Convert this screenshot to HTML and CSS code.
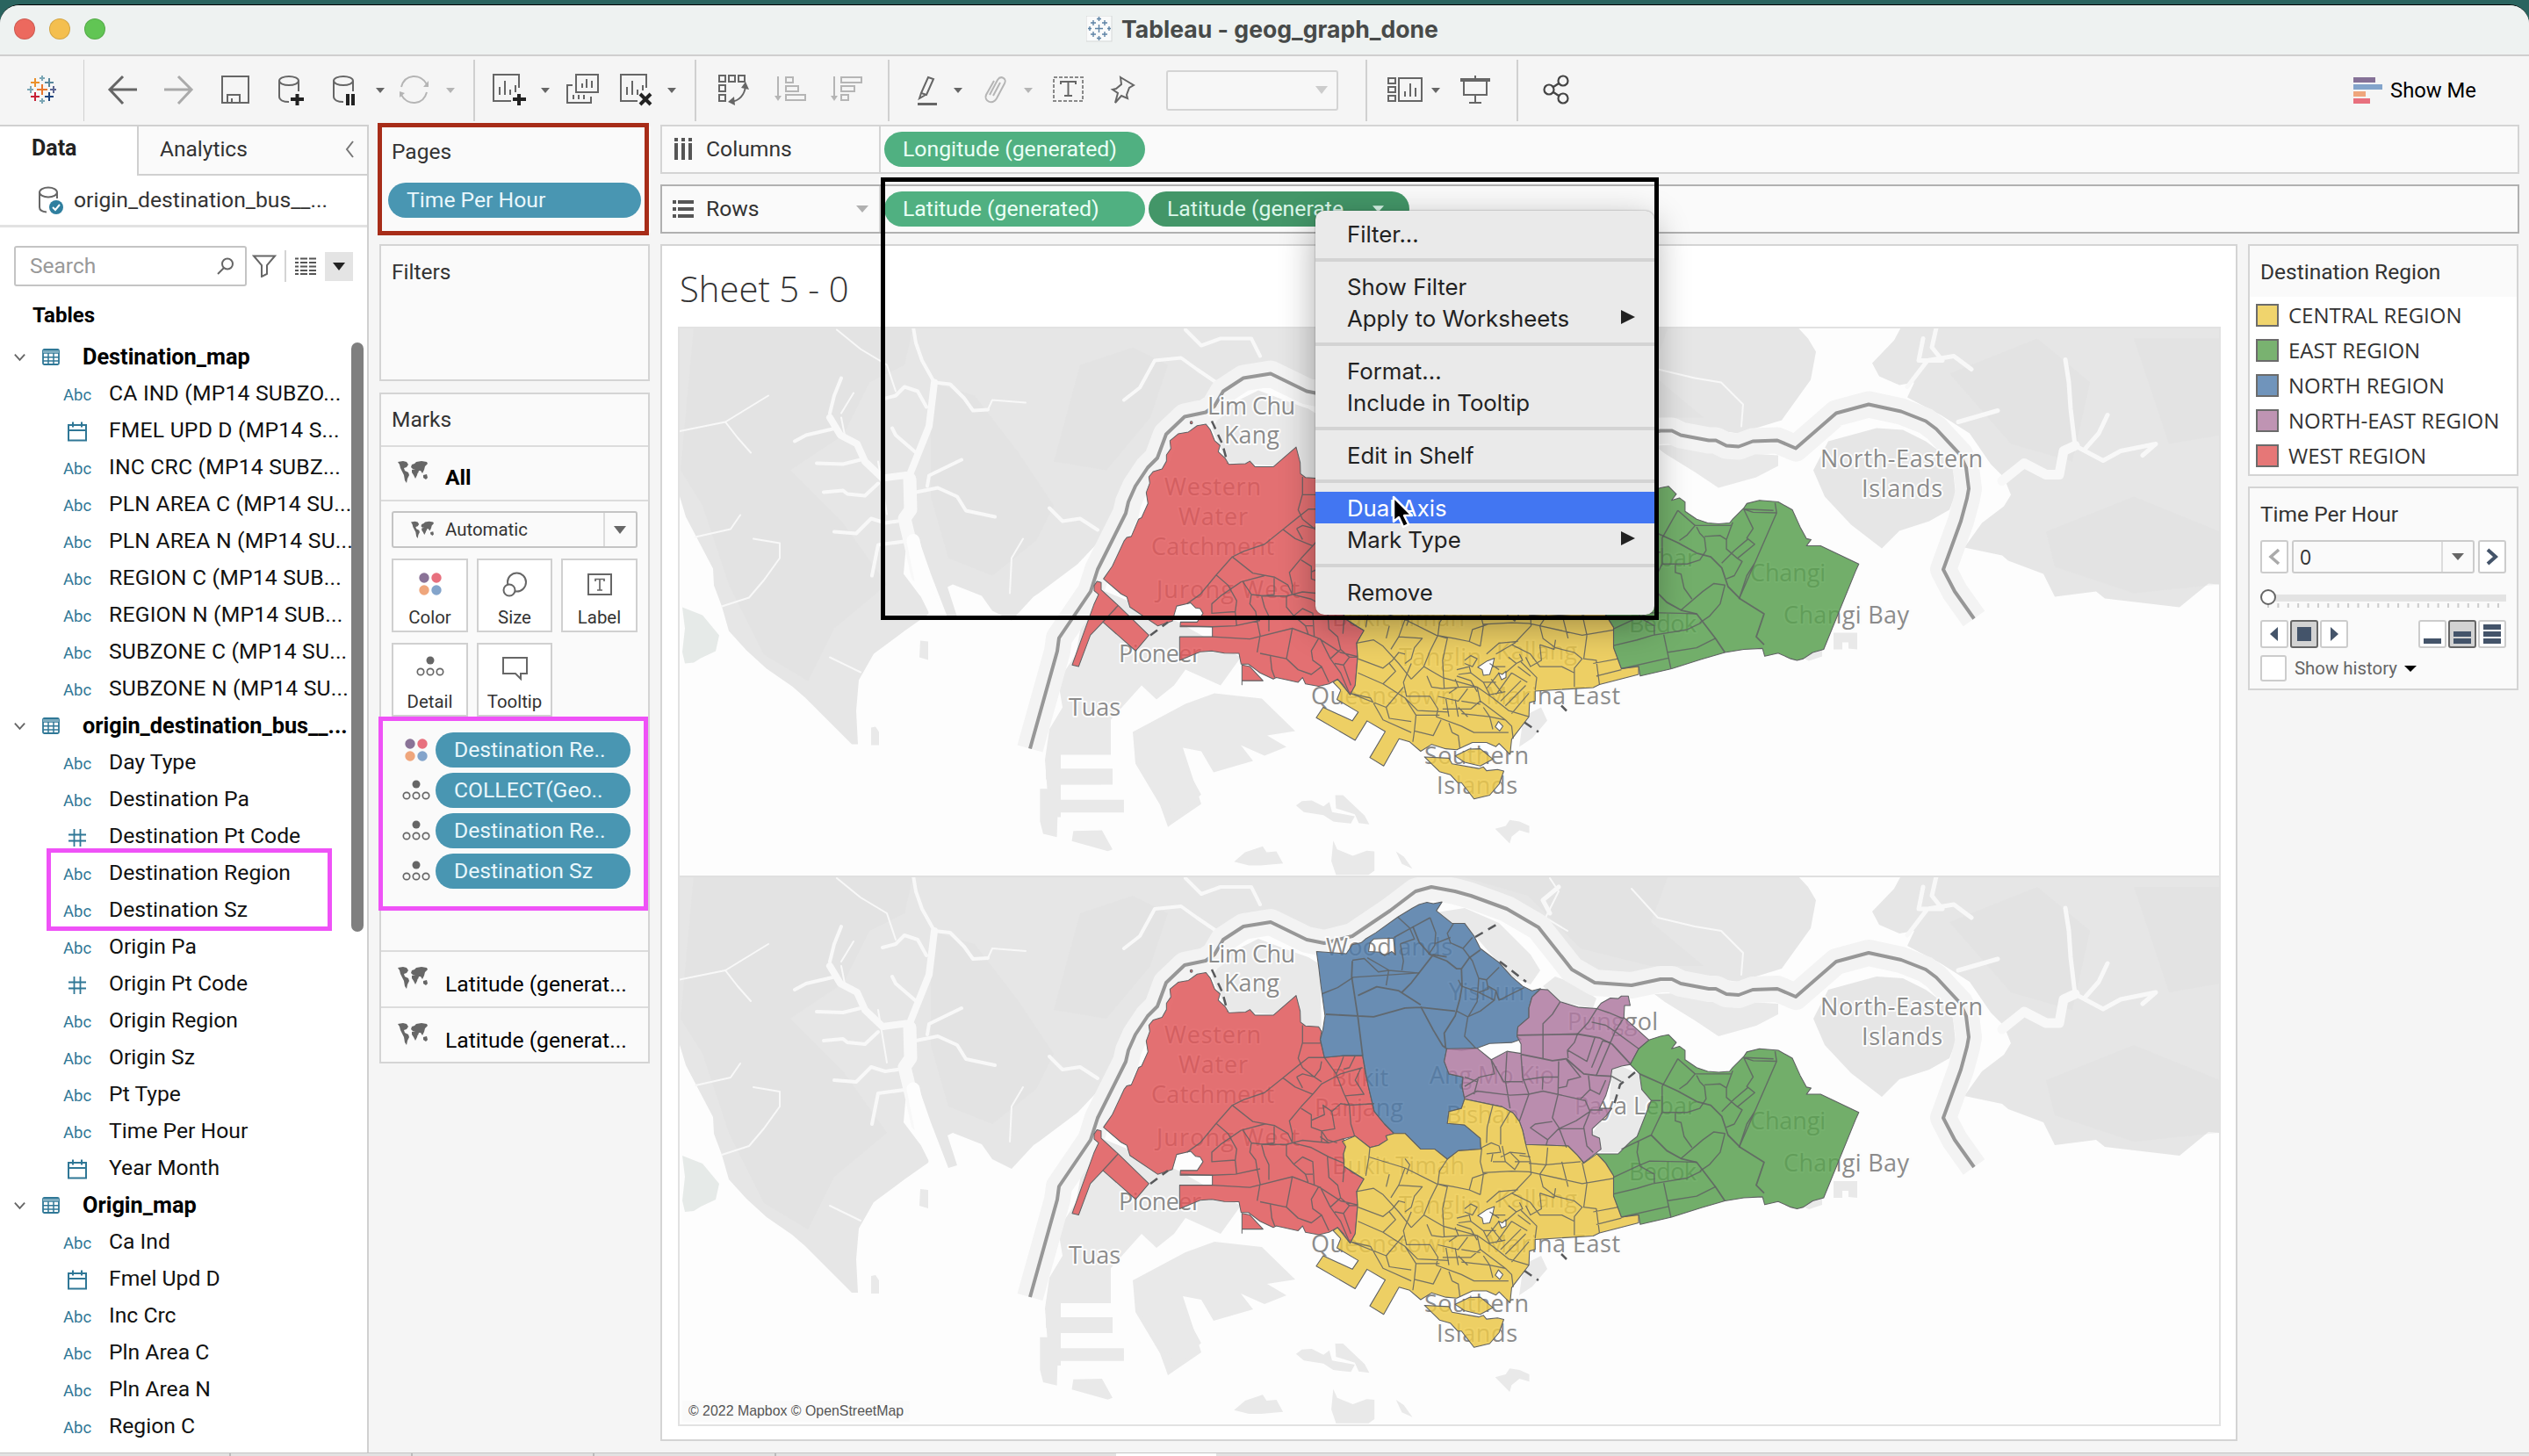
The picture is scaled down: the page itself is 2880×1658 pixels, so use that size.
FILE: index.html
```html
<!DOCTYPE html>
<html lang="en">
<head>
<meta charset="utf-8">
<title>Tableau - geog_graph_done</title>
<link rel="stylesheet" href="styles.css">
</head>
<body>
<svg class="defs" width="0" height="0">
  <defs>
    <symbol id="cal" viewBox="0 0 24 26"><path d="M2 5h20v17.5H2zM2 11h20M7 1.500v6M17 1.500v6" fill="none" stroke="#2f7796" stroke-width="2"/></symbol>
    <symbol id="hash" viewBox="0 0 24 26"><path d="M8.500 3v20M15.500 3v20M2 9.500h20M2 16.500h20" fill="none" stroke="#2f7796" stroke-width="1.800"/></symbol>
    <symbol id="table" viewBox="0 0 20 20"><rect x="1" y="1" width="18" height="17" rx="1.500" fill="#fff" stroke="#2f7796" stroke-width="1.800"/><path d="M1 5h18M1 9.700h18M1 14h18M7 5v13M13 5v13" stroke="#2f7796" stroke-width="1.500"/><path d="M1 2h18v3H1z" fill="#7fadc0"/></symbol>
    <symbol id="chev" viewBox="0 0 16 10"><path d="M2 1.500l6 6.500 6-6.500" fill="none" stroke="#666" stroke-width="2"/></symbol>
    <symbol id="world" viewBox="0 0 34 26"><path fill="#666" d="M0 2l6-1 4 1 2 3-2 3-3 1 1 3 4 2 1 3-2 4-1 5-2-3-1-6-2-4-2-4-1-4zM16 5l3-1 2-2 6-1 6 1 1 2-3 3-1 4-2 4-2-3-2 0-1 3-1-2-2-3-3 0-2-2zM16 11l4-1 3 3-1 4-2 4-2-4-2-3zM29 17l4-1 1 4-2 2-3-2z"/></symbol>
    <symbol id="dots4" viewBox="0 0 28 28"><circle cx="7" cy="7" r="5.700" fill="#8a7397"/><circle cx="21" cy="7" r="5.700" fill="#e8707e"/><circle cx="7" cy="21" r="5.700" fill="#efa67c"/><circle cx="21" cy="21" r="5.700" fill="#83a4cb"/></symbol>
    <symbol id="detail" viewBox="0 0 32 24"><circle cx="16" cy="5" r="4.500" fill="#666"/><g fill="none" stroke="#666" stroke-width="1.700"><circle cx="5" cy="18" r="3.700"/><circle cx="16" cy="18" r="3.700"/><circle cx="27" cy="18" r="3.700"/></g></symbol>

    <!-- Region outlines; the first uses the western tile grid, the rest the eastern one -->
    <g id="west"><g transform="translate(1150 980) scale(.33333 .35714)">
      <path d="M320 850L350 810 390 730 400 718 415 715 440 660 450 655 472 610 466 575 478 545 475 525 490 508 520 500 535 475 535 455 550 435 547 410 575 388 610 382 640 362 670 357 685 375 700 410 718 425 712 445 735 465 748 485 805 483 820 475 838 493H900L978 430 992 480 993 515 1010 527 1055 530 1065 545 1060 570 1075 628 1140 622H1205L1215 680 1225 720 1245 800 1280 840 1312 870 1285 878 1290 890 1260 908 1230 915 1180 878 1140 887 1148 912 1140 935 1142 975 1180 1000 1210 1015 1185 1055 1188 1100 1180 1190 1162 1220 1140 1190 1120 1170 1090 1185 1055 1193 1010 1185 1000 1165 985 1180 910 1165 900 1170 855 1150 815 1122 790 1122 783 1088 733 1087 690 1080 650 1083 580 1110V1035H692V1003H582L583 988H640L660 960 650 945 635 943 618 927 570 937 555 985 505 1000 410 940 400 908 380 898Z"/>
      <path d="M288 872L298 858 312 862 312 885 370 935 475 1030 430 1080 318 988 275 1030 235 1130 213 1125 288 930 303 900 288 888ZM793 1188V1125L820 1130 865 1175H793Z"/><circle cx="620" cy="352" r="4"/>
    </g></g>
    <g id="north"><g transform="translate(1600 980) scale(.35714)">
      <path d="M-282 290L-187 297-168 268-140 262-126 250-93 230-23 180 23 152 45 140 70 133 90 137 118 132 100 160 150 200 190 200 220 240 240 280 300 325 340 370 375 400 405 415 432 408 405 435 395 470V500L360 530 357 560 370 570 340 580 270 583 230 598 180 605 133 600 125 640 140 680 185 690 182 720 190 760 180 790 140 800 135 838 190 843 240 885 242 920 170 925 135 952 95 920 50 920 0 870-35 870-65 840-98 800-117 720-135 622-197 622-257 628-270 570-262 540-255 495-268 400-275 340ZM-116 290L-112 262-100 250-37 247-30 300-42 290-65 303-80 292Z" fill-rule="evenodd"/>
    </g></g>
    <g id="northeast"><g transform="translate(1600 980) scale(.35714)">
      <path d="M432 410L455 412 495 450 555 468 612 472 625 455 655 438 680 440 690 432 712 432 718 462 700 462 698 500 778 572 745 600 718 650 690 655 660 665 655 700 640 750 620 790 660 790 640 815 597 855 597 875 620 885 625 920 570 963 550 940 520 910 385 905 375 860 365 832 345 805 310 785 190 760 182 720 185 690 140 680 125 640 133 600 230 598 275 635 325 608 370 615 370 585 357 560 360 530 395 500V470L405 435Z"/>
    </g></g>
    <g id="east"><g transform="translate(1600 980) scale(.35714)">
      <path d="M778 572L815 560 840 555 865 580 850 600 875 592 893 605V635L930 660 965 672 1000 675 1035 672 1045 660 1080 625 1090 610 1130 600 1190 605 1235 630 1260 685 1280 722 1295 725 1280 745H1300L1325 745 1447 803 1437 825 1335 1075 1300 1085 1270 1105 1250 1110 1230 1105 1190 1087 1147 1097 1140 1072 1080 1075 1020 1085 945 1107 850 1137 750 1160 745 1130 690 1137 665 1070V1005L640 965 612 935 680 935 720 895 740 880 785 765 755 730 748 680 718 650 745 600Z"/>
    </g></g>
    <g id="central"><g transform="translate(1600 980) scale(.35714)">
      <path fill-rule="evenodd" d="M190 760L310 785 345 805 365 832 375 860 385 905 520 910 550 940 570 965 612 935 640 965 665 1005V1070L690 1137 745 1130V1155L620 1187 600 1197 415 1208V1240L397 1245 395 1290 340 1362 335 1410 300 1375 290 1385 260 1372H215L165 1395 130 1392 85 1378 50 1400 15 1370-19 1360-68 1447-112 1420-63 1337-121 1303-159 1365-283 1293-261 1260-168 1303-149 1275-217 1235-205 1205-229 1180-215 1170-175 1220-159 1190-151 1100-154 1055-131 1015-194 975-196 935-189 912-200 895-159 878-112 915-84 908-56 890-61 878-35 870H0L50 920H95L135 952 170 925 242 920 240 885 190 843 135 838 140 800 180 790ZM232 1132L262 1112 285 1103 280 1125 270 1155 250 1158 246 1140ZM298 1150L310 1155 322 1145V1165L308 1172ZM288 1322L298 1305 312 1320 302 1335Z"/>
      <path d="M160 1415L205 1393 240 1392 280 1425 240 1447 190 1435ZM62 1418L140 1422 150 1440 235 1455 250 1450 260 1462 295 1458 315 1463 300 1505 270 1540 220 1552 180 1500 168 1500 145 1475 110 1465Z"/>
    </g></g>

    <g id="border"><path d="M1173 1477L1204 1366 1206 1351 1242 1298 1250 1273 1282 1209 1285 1196 1293 1178 1307 1157 1318 1146 1328 1119 1349 1099 1373 1094 1383 1087 1393 1070 1416 1055 1447 1050 1488 1070 1508 1074 1540 1066 1583 1037 1612 1015 1630 1010 1657 1015 1675 1020 1716 1035 1752 1056 1790 1104 1816 1119 1858 1122 1891 1115H1904L1914 1120 1946 1126H1954L1966 1132 1980 1133 1996 1127 2024 1126 2045 1135 2091 1095 2128 1085 2165 1093 2193 1104 2205 1113 2232 1142 2239 1157 2242 1181 2240 1192 2233 1218 2213 1273 2226 1298 2248 1329"/></g>

    <g id="basemap">
      <rect x="772" y="997" width="1756" height="626" fill="#fdfdfd"/>
      <g fill="#e6e6e6">
        <path d="M772 997H2047L2059 1010 2068 1025 2062 1057 2029 1103 1980 1118 1904 1108 1858 1122 1790 1104 1752 1056 1630 1010 1583 1037 1508 1074 1447 1050 1393 1070 1328 1119 1282 1209 1227 1267 1183 1300 1177 1304 1152 1331 1130 1320 1118 1303 1085 1290 1079 1293 1090 1327 1080 1330 1060 1278 1045 1235 1032 1244 1029 1278 1047 1302 1060 1313 1057 1324 1030 1343 995 1369 978 1399 975 1434 977 1472H970L917 1419 902 1406 873 1386 850 1365 830 1343 822 1315 813 1291 812 1272 781 1213 772 1183Z"/>
        <path d="M2165 997L2157 1012 2132 1038 2140 1053 2163 1063 2180 1060 2172 1077 2210 1097 2243 1118 2267 1153 2282 1168 2290 1188 2282 1201 2257 1220 2237 1248 2280 1257 2287 1263 2327 1278 2340 1304 2387 1298 2397 1306 2482 1316 2515 1289 2528 1290V997Z"/>
        <path d="M2082 1127L2137 1112 2167 1114 2193 1127 2223 1149 2227 1187 2220 1205 2197 1218 2163 1229 2143 1249 2108 1222 2078 1190 2065 1160Z"/>
      </g>
      <g fill="#dedede" opacity=".3">
        <path d="M790 997H1040L1030 1040 990 1060 960 1120 900 1160 960 1220 1010 1290 950 1340 920 1400 870 1370 830 1290 800 1200 775 1160ZM1060 1060L1110 1075 1160 1140 1200 1200 1180 1240 1130 1280 1080 1260 1060 1190ZM1230 1040L1290 1020 1330 1040 1310 1100 1260 1160 1200 1150ZM1660 997H1900L1880 1050 1940 1100 1880 1100 1800 1080 1740 1020ZM2220 1050L2320 1010 2380 1060 2360 1150 2290 1130ZM2330 1230L2430 1190 2528 1230V1290L2430 1300 2340 1270ZM2430 1010H2528V1120L2470 1130Z"/>
      </g>
      <path fill="#e6eae8" d="M777 1316L800 1325 819 1348 815 1366 798 1374 790 1379 780 1380 777 1367 780 1340Z"/>
      <g fill="none" stroke="#f8f8f8" stroke-linejoin="round" stroke-linecap="round">
        <path stroke-width="15" d="M1036 1170L1037 1205 1030 1215 1036 1240 1045 1280"/>
        <path stroke-width="8" d="M1064 1060L1058 1110 1036 1165 1005 1169 985 1150 976 1130 957 1120 945 1100"/>
        <path stroke="#fdfdfd" stroke-width="15" d="M1040 1240L1050 1290 1065 1320"/>
        <path stroke-width="4" d="M1064 1060L1050 1035 1043 1015 1040 997M1064 1060L1082 1062 1098 1078 1108 1092 1125 1091M1055 1088L1045 1070 1030 1065 1020 1075 1005 1079M945 1095L950 1075 958 1055M948 1113L918 1120 905 1127M980 1148L960 1153 930 1152M1000 1175L985 1189 965 1187 960 1183 938 1185M1022 1218L1008 1220 992 1215 975 1232 950 1230M1030 1241L1000 1245 993 1280M1043 1185L1068 1180 1090 1190 1100 1206 1133 1213M1056 1178L1058 1166 1095 1148M1042 1139L1020 1120 1016 1112M1385 1060L1363 1045 1345 1032 1315 1035 1298 1066 1280 1080M1435 1030L1425 1010 1390 1010 1368 1018 1350 1000M1250 1228L1230 1215 1210 1218 1195 1203"/>
        <path stroke-width="2" d="M1125 1091L1130 1080 1168 1083M958 1100L962 1120 975 1130M958 1095L972 1072M772 1116L826 1105 875 1075M826 1105L840 1123 855 1140M792 1236L832 1227 843 1211M822 1315L853 1305 870 1285 888 1260V1243L858 1238M1150 1300L1152 1260 1165 1238M953 1000L980 1022 1010 1040 1020 1070M1000 1150L1010 1210M945 1373L980 1390M1765 1000L1775 1015 1760 1045 1785 1060M1858 1012L1888 1045 1930 1055 1960 1060 1985 1085 1983 1110"/>
        <path stroke-width="5" d="M1765 1040L1757 1025 1775 1010M2205 998L2200 1020 2212 1035 2185 1035 2190 1010M2172 1065L2195 1035 2225 1030 2245 1045"/>
        <path stroke-width="11" d="M2280 1172L2305 1152 2330 1165 2345 1165 2350 1138 2363 1132"/>
        <path stroke-width="5" d="M2363 1132L2358 1090 2356 1060 2352 1034M2363 1132L2395 1149 2415 1138 2455 1130 2440 1143M2375 1135L2390 1118 2400 1097M2230 1105L2275 1092"/>
      </g>
      <g fill="#e9e9e9">
        <path d="M1884 1132L1930 1130 1960 1139 2025 1143V1155L2000 1168 1957 1180 1930 1162 1896 1141ZM1397 1087L1433 1069 1470 1083 1490 1090 1503 1098 1505 1172 1480 1166 1474 1137 1450 1155 1397 1151 1380 1112ZM1636 1039L1668 1034 1707 1051 1743 1087 1754 1105 1743 1121 1720 1112 1680 1066 1654 1051ZM1757 1123L1771 1112 1796 1121 1818 1137 1814 1148 1778 1141ZM1836 1217L1846 1214 1866 1223 1870 1241 1880 1253 1864 1294 1843 1312 1823 1312 1813 1291 1832 1262ZM1240 1290L1340 1332 1413 1373 1390 1405 1350 1387 1337 1405 1317 1421 1300 1405 1265 1444V1484H1208V1500H1267V1518H1208V1555H1195L1190 1490 1195 1455 1210 1430 1205 1400 1225 1370ZM1290 1458L1350 1426 1383 1414 1437 1420 1475 1457 1443 1462 1465 1475 1440 1485 1413 1473 1427 1491 1382 1504 1368 1480 1347 1476 1368 1540 1330 1566 1321 1541 1293 1494Z"/>
        <path d="M2088 1345H2115V1364L2105 1363V1356H2098V1364H2088ZM2050 1360H2075V1372L2060 1377 2045 1370ZM1735 1440L1755 1430 1762 1445 1745 1465 1730 1475Z"/>
        <path d="M1048 1354L1057 1355V1376L1047 1373ZM992 1453L997 1452 1001 1458V1473H992Z"/>
        <path transform="translate(1150 1490) scale(.44643 .33333)" d="M92 0H130V30H262V65L232 83H130V136H291V179H122L120 263 85 252 77 210V98H105V75L92 65ZM162 242L235 240 262 305 250 311 158 277ZM330 0H440L488 118 402 230 422 190 405 153 383 150ZM730 155L745 140 770 138 800 158 815 143 822 178 880 192 870 217 825 210 800 188 750 178ZM830 120H850L905 190 917 220 890 215 880 185 832 165ZM572 347L600 315 645 295 655 315 680 312 697 353 640 360H610ZM825 275L835 305 875 327 910 310 930 312V378L915 392H832L820 345ZM985 312L1005 330 1027 371 1000 355ZM1238 235L1265 225 1275 205 1300 210 1325 225V250L1300 240 1280 262 1275 285Z"/>
        <path d="M1406 982H1460L1455 991 1430 995 1408 988Z"/>
        <use href="#west"/><use href="#north"/><use href="#northeast"/><use href="#east"/><use href="#central"/>
      </g>
      <g fill="none" stroke="#f3f3f3" stroke-width="30" stroke-linejoin="round"><use href="#border"/></g>
      <g fill="none" stroke="#979797" stroke-width="4" stroke-linejoin="round"><use href="#border"/></g>
    </g>

    <g id="regions">
      <g stroke="#5f6163" stroke-width="3" fill-opacity=".83" stroke-linejoin="round">
        <use href="#west" fill="#e15759"/><use href="#north" fill="#4e79a7"/><use href="#northeast" fill="#b07aa1"/><use href="#east" fill="#59a14f"/><use href="#central" fill="#edc948"/>
      </g>
      <g fill="none" stroke="#5f6163" stroke-opacity=".85" stroke-linejoin="round">
        <!-- western subzones -->
        <g transform="translate(1150 980) scale(.33333 .35714)" stroke-width="4">
          <path d="M605 930L650 900 705 838 760 780 800 762 870 740 930 695 990 650 1020 628 1075 628M760 780L830 832 905 845 950 870 965 900 1030 915 1090 945 1142 965M705 838L745 870 775 920 770 955 690 960 690 930 720 905 790 860 870 840M795 858L825 900 820 930 840 955 845 985 855 1030 845 1085M583 1000L690 1003 770 1000 855 983M692 1035L820 1042 965 1008 1055 1040 1130 1085 1188 1098M770 955L775 1000M903 848V900L860 905 870 940 885 970V1018M870 905L945 905 1000 892 1090 900 1140 887M945 905L945 940 970 968 1010 1000 1020 1028M970 968L1000 945 1035 960 1040 1035M932 692L975 722 1035 745 1065 712 1130 680 1205 660M1035 745L995 785 955 830 965 870 965 900M995 790L1030 810 1030 850 1065 862 1065 900M1030 828L1075 810 1070 780 1100 800 1130 775 1160 780 1245 775M1000 525L1000 580 985 630 1000 660 1040 690 1065 705M1000 582H1062M1065 640L1060 665 1040 690M1075 628L1115 680 1140 740 1160 780 1165 840 1178 878M1140 625L1128 655 1115 680M1180 622L1160 660 1140 665M1200 660L1180 700 1210 745 1145 750M1100 800L1110 855 1065 862 1085 890 1118 900M890 1097L895 1140 905 1165M965 1008L945 1105 855 1088M945 1105L985 1140 1030 1155 1065 1130 1035 1110 1030 1080 1055 1040M1060 1040L1095 1105 1130 1150 1160 1215M1065 1130L1090 1180M1095 1105L1130 1075 1160 1100 1140 1125 1110 1120M1160 1100H1185M1130 1075L1120 1035 1090 1010 1085 945M1142 975L1138 1025M318 988L370 935M1140 1125L1165 1190M1035 1000L1010 1000M980 690L1000 680 1040 690M980 690L1000 725M825 900L870 905M1090 900L1060 880"/>
        </g>
        <g transform="translate(1600 980) scale(.35714)" stroke-width="4">
          <!-- northern subzones -->
          <path stroke-width="5" d="M-252 490L-100 498 0 470 50 468 160 480M-168 320L-170 370-150 500-135 622M50 465L90 540 120 590 133 600M-150 430L-90 402-20 415 50 460M133 307L90 300 20 390-10 420M25 210L45 260 80 300 133 320 165 345 180 345 205 310 240 285M180 345L182 400 175 440 160 495 125 550 130 600"/>
          <path d="M-265 425L-215 405-165 372 45 358M-168 318L-130 312-85 355-52 350 40 358M-120 310L-50 350M-52 350L-60 398M-15 265L-5 320-10 350M-23 180L15 215 30 250-15 265M80 182L25 212-35 245M80 182L98 230 95 270 75 300M155 200L135 232 145 262 185 280 215 245M145 245L95 265M185 280L215 320 235 375 230 450 200 500 190 560 225 598M170 380L180 400 235 420 285 445 240 480 200 498M235 375L260 380 300 340M235 420L265 410 260 380M265 400L290 415 285 445M290 415L300 445 380 405M165 480L200 498"/>
          <!-- north-eastern subzones -->
          <path stroke-width="5" d="M357 557L550 553 620 565 660 585 720 650M370 618L440 632 470 638 515 632 570 680 610 685 660 688 690 705"/>
          <path d="M495 450L470 490 440 520V630M612 472L585 515 550 553 540 580 518 605 520 630M612 472L650 485 698 505M698 500L670 545 745 600M595 515L640 525 670 545 655 580 610 685M605 565L580 640 520 605M655 580L630 575 595 660M325 610L320 700 335 790M370 618L375 690 395 745 365 830M275 635L285 680 240 690 190 720M490 640L488 745 470 820 490 850 515 915M395 745L440 735 575 765 590 800 570 850 580 910 600 930M375 700L440 690 488 690M440 690L438 730M488 725L515 720 520 700 560 690 515 635M190 755L230 735 335 748 395 745M235 690L220 745M230 705L190 690M275 635L315 705 375 705M590 800L545 830 490 855 455 890 400 852 415 840 470 832M490 855H570M560 760L590 730 620 745 640 700M590 730L585 685M455 890L450 908M590 795L630 795"/>
          <!-- eastern subzones -->
          <path stroke-width="5" d="M748 680L820 712 870 735 930 768 975 780 1010 815 1030 875 1070 915 1145 962 1120 1035 1145 1060M785 875L835 925 880 950 930 962 990 1040 1020 1085"/>
          <path d="M870 632L820 720V802L785 875 690 920M870 632L925 680 900 710 875 728M930 685L940 705 955 720 960 760 940 790 900 803H820M925 680L1040 680M955 715L1005 712 1025 725 1025 755 1060 785 1075 795 1050 840 1025 850M1025 725L1045 670M1060 785L1115 740 1090 720 1110 690 1080 628M1080 628L1110 638 1185 640 1065 915M1185 640L1180 608M1080 628L1175 632M862 805V830L880 835 890 880 915 915M880 950L950 890 985 865 1020 870 1005 930 970 970 940 990M665 1010L740 975 780 958 880 960 930 962M665 1063L740 1045 790 1030 900 1012 945 990M825 1028L848 1137M690 1137L840 1103M835 1085L930 1070 990 1040M745 895L740 930 750 975 795 1000V1028M785 765H815M1010 800L1050 760 1095 722M1065 915L1090 840 1115 800"/>
          <!-- central subzones -->
          <path stroke-width="3.500" d="M-112 915L-115 945 0 980 100 1030 155 1040 205 1050 240 1065M-115 945L-125 1005M0 980L-20 1035M-20 1035L55 1040 30 1070 20 1105 0 1120M-155 1055L-100 1045-70 1065-20 1120 20 1170M-150 1105L-70 1135-40 1110-20 1085 0 1090M-150 1150L-70 1185 0 1230 40 1270M-20 1035L-45 1075M-175 1215L-110 1230-70 1300 20 1340M-60 1260L-50 1295 20 1305M-70 1185L-30 1145-50 1120M20 1120L-5 1180 5 1225 80 1225M-175 1215L-60 1260-5 1195M135 952L110 990 105 1030 80 1080 60 1130 120 1165M245 915L240 960 250 1000 240 1065M245 915L275 900 300 910 305 930 260 935M280 780L262 850 260 900M335 800L305 850V905M250 995L340 990 395 992 430 1000 565 1030 665 1013M100 1030L135 1040 120 1110 125 1200M205 1050L215 1012 265 995M385 905L400 960 402 1000 350 1055 290 1090M455 915L450 970 430 1000 440 1040 480 1070 540 1085 565 1105 540 1135V1195M500 960L520 1040M565 963L580 1030 570 1105 610 1110 620 1187M450 970L560 960M395 965L450 970M310 910L320 960 350 985 365 960 335 930 305 945M335 930L385 935M260 1090L300 1055 360 1050M340 1060L400 1090 430 1130 500 1130 540 1150M430 1060L435 1110 400 1130 385 1100M415 1205L420 1165 400 1145 370 1115M600 1120L680 1105M610 1160L690 1140M480 1045L475 1075 430 1060M395 1290L330 1270 280 1230 230 1195 120 1165M120 1200L180 1195 230 1195M260 1200L300 1150M290 1220L340 1150M305 1240L370 1175M320 1255L385 1190M340 1280L395 1215M230 1195L240 1240 210 1265 120 1265M240 1240L320 1300M80 1225L105 1265 100 1290 180 1320 220 1340H330M130 1230L140 1290M160 1235L170 1290M180 1240L240 1250M200 1200L170 1240 105 1225M35 1285L110 1285M35 1285L30 1335 90 1350 115 1300M30 1335L25 1370M150 1340L170 1350 175 1390M140 1310L150 1340M190 1110L210 1095 230 1105 215 1130 190 1120M165 1140L205 1130 210 1150 170 1155M165 1160L210 1175M210 1150L250 1180 290 1180M270 1120L300 1140M275 1170L310 1215M250 1180L270 1220 320 1210M210 1175L230 1210M280 1130L320 1130M330 1100L355 1120 320 1150M355 1120L375 1110 365 1090M340 1150L390 1180M360 1130L400 1160M270 1290L280 1330M250 1260L270 1290 320 1300M320 1300L340 1320 345 1360M180 1280L270 1290M40 1270L140 1275M20 1170L60 1130M70 1160L85 1195 120 1200M0 1230L35 1285M-60 1040L-50 1000M0 950L15 970 5 1000M280 960H320M280 935L275 960M350 960H400M365 940L400 945M170 1260L200 1290M140 1215L170 1195 160 1170"/>
        </g>
      </g>
      <g fill="none" stroke="#58595b" stroke-width="2.500" stroke-dasharray="10 7"><path d="M1380 1104L1392 1130 1398 1152M1680 1067L1704 1053M1708 1095L1738 1118M1862 1221L1845 1235 1838 1258M1778 1428L1784 1434M1736 1447L1752 1458M1310 1348L1330 1333"/></g>
    </g>
  </defs>
</svg>

<div class="window">
  <header class="titlebar">
    <div class="lights"><i class="red"></i><i class="amber"></i><i class="green-light"></i></div>
    <div class="title">
      <svg width="30" height="30" viewBox="0 0 30 30"><rect width="29" height="29" fill="#fafbfb" stroke="#d5d8d8"/><path d="M14.500 10v9M10 14.500h9M8 5v6M5 8h6M21 5v6M18 8h6M8 18v6M5 21h6M21 18v6M18 21h6M14.500 1v5M12 3.500h5M14.500 23v5M12 25.500h5M2 14.500h4M4 12v5M24 14.500h4M26 12v5" stroke="#5d83a5" stroke-width="1.400"/></svg>
      <span>Tableau - geog_graph_done</span>
    </div>
  </header>

  <nav class="toolbar">
    <svg width="95" height="70" viewBox="0 68 95 70" fill="none" stroke-width="2"><path stroke="#e8762d" d="M48 96v12M42 102h12"/><path stroke="#eb912c" d="M40 89v10M35 94h10"/><path stroke="#59879b" d="M56 89v10M51 94h10"/><path stroke="#c72035" d="M40 105v10M35 110h10"/><path stroke="#1f447e" d="M56 105v10M51 110h10"/><path stroke="#5b6591" d="M61 98v8M57 102h7"/><path stroke="#7ba6b5" d="M48 86v6M45 89h6M48 112v6M45 115h6M35 98v8M31 102h7"/></svg>
    <i class="sep"></i>
    <svg width="443" height="70" viewBox="96 68 443 70" fill="none" stroke="#666" stroke-width="2.500">
      <path stroke-width="3" d="M140 87L125 102l15 16M125 102h31"/><path stroke="#aaa" stroke-width="3" d="M203 87l15 15-15 16M218 102h-31"/>
      <path stroke-width="2" d="M253 87h30v30h-30zM259 117v-9h14v9M264 117v-5"/>
      <g stroke-width="2"><ellipse cx="329" cy="92" rx="11" ry="5"/><path d="M318 92v18c0 4 5 6 11 6M340 92v12"/><ellipse cx="391" cy="92" rx="11" ry="5"/><path d="M380 92v18c0 4 5 6 11 6M402 92v12"/></g>
      <path stroke="#222" stroke-width="4" d="M338.500 107v13M331 113h15M396 107v13M402 107v13"/>
      <path fill="#666" stroke="none" d="M428 100h10l-5 6z"/>
      <g stroke="#b5b5b5" stroke-width="2"><path d="M457 99c4-15 22-16 29-3M486 105c-4 15-22 16-29 3"/><path fill="#b5b5b5" stroke="none" d="M482 99h6v-7zM455 104v7l6-5zM508 100h10l-5 6z"/></g>
    </svg>
    <i class="sep"></i>
    <svg width="250" height="70" viewBox="541 68 250 70" fill="none" stroke="#666" stroke-width="2">
      <path d="M591 100V85h-29v30h20M569 108v-9M575 108V92M581 108v-6M587 105V97"/><path stroke="#222" stroke-width="4" d="M591 107v13M584 113h15"/>
      <path d="M656 85h25v20h-25zM663 100v-5M668 100V90M674 100v-8M652 97h-6v20h27v-7M653 113v-5M659 113v-5M665 113v-5"/>
      <path d="M736 100V85h-29v30h19M714 108v-9M720 108V92M726 108v-6M732 103V97"/><path stroke="#222" stroke-width="4" d="M729 107l12 12M741 107l-12 12"/>
      <path fill="#666" stroke="none" d="M616 100h10l-5 6zM760 100h10l-5 6z"/>
    </svg>
    <i class="sep"></i>
    <svg width="218" height="70" viewBox="793 68 218 70" fill="none" stroke="#666" stroke-width="2">
      <path d="M819 86h7v7h-7zM830 86h7v7h-7zM841 86h7v7h-7zM819 97h7v7h-7zM819 108h7v7h-7zM832 116c10-1 16-8 17-18"/><path fill="#666" stroke="none" d="M844 100l5-7 4 9zM836 110l-7 6 8 4z"/>
      <g stroke="#b5b5b5"><path d="M886 87v24M895 88h8v6h-8zM895 98h14v6h-14zM895 108h22v6h-22zM950 87v24M958 88h23v6h-23zM958 98h15v6h-15zM958 108h8v6h-8z"/><path fill="#b5b5b5" stroke="none" d="M882 109h8l-4 6zM946 109h8l-4 6z"/></g>
    </svg>
    <i class="sep"></i>
    <svg width="310" height="70" viewBox="1013 68 310 70" fill="none" stroke="#666" stroke-width="2">
      <path d="M1057 88l6 2-8 18-6-2zM1049 106l-2 6 7-4"/><path stroke-width="3" d="M1045 118.500h22"/>
      <path stroke="#b5b5b5" d="M1127 108l9-17c4-6 11-1 8 4l-9 17c-5 8-15 3-12-4l9-16M1131 109l8-15"/>
      <path stroke="#888" stroke-dasharray="4 2" d="M1200 88h33v27h-33z"/><path d="M1208 96v-3h17v3M1216.500 93v16M1212 109h9"/>
      <path d="M1276 88l15 9-5 3-3 8 1 4-7-3-7 8 3-11-6-4 4-1 6-5z"/>
      <path fill="#666" stroke="none" d="M1086 100h10l-5 6z"/><path fill="#b5b5b5" stroke="none" d="M1166 100h10l-5 6z"/>
    </svg>
    <div class="fit"><svg width="14" height="10" viewBox="0 0 14 10"><path fill="#ccc" d="M0 0h14l-7 9z"/></svg></div>
    <i class="sep"></i>
    <svg width="170" height="70" viewBox="1557 68 170 70" fill="none" stroke="#666" stroke-width="2">
      <path d="M1581 89h8v6h-8zM1581 99h8v6h-8zM1581 109h8v6h-8zM1593 89h26v26h-26zM1600 110v-6M1606 110V95M1612 110V100"/><path fill="#666" stroke="none" d="M1630 100h10l-5 6z"/>
      <path stroke-width="4" d="M1663 91h34"/><path d="M1667 92v16h26V92M1680 86v4M1680 108v9M1673 117h14"/>
    </svg>
    <i class="sep"></i>
    <svg width="70" height="70" viewBox="1729 68 70 70" fill="none" stroke="#444" stroke-width="2.200"><circle cx="1764" cy="102" r="5.500"/><circle cx="1780" cy="92" r="5.500"/><circle cx="1780" cy="112" r="5.500"/><path d="M1769 99l6-4M1769 105l6 4"/></svg>
    <div class="showme"><svg width="33" height="30" viewBox="0 0 33 30"><path fill="#857197" d="M0 0h25v6H0z"/><path fill="#83a4cb" d="M0 8h33v6H0z"/><path fill="#efa67c" d="M0 16h14v6H0z"/><path fill="#e8707e" d="M0 24h19v6H0z"/></svg><span>Show Me</span></div>
  </nav>

  <div class="main">
    <aside class="sidebar">
      <div class="tabs"><div class="tab on">Data</div><div class="tab off"><span>Analytics</span><svg width="12" height="20" viewBox="0 0 12 20"><path d="M10 1L3 10l7 9" fill="none" stroke="#777" stroke-width="2"/></svg></div></div>
      <div class="source">
        <svg width="32" height="34" viewBox="0 0 32 34"><g fill="none" stroke="#666" stroke-width="2"><ellipse cx="12" cy="8" rx="10" ry="5.500"/><path d="M2 8v17c0 3 3 5 8 5.500M22 8v7"/></g><circle cx="21" cy="25" r="8" fill="#2f7f9f"/><path d="M17 25l3 3 5-6" fill="none" stroke="#fff" stroke-width="2"/></svg>
        <span>origin_destination_bus__...</span>
      </div>
      <div class="searchrow">
        <div class="search"><span>Search</span><svg width="20" height="20" viewBox="0 0 20 20" fill="none" stroke="#666" stroke-width="2"><circle cx="12" cy="7.500" r="6"/><path d="M8 12l-7 7"/></svg></div>
        <svg width="28" height="26" viewBox="0 0 28 26"><path d="M2 1.500h24l-9 10.500v10l-6 3V12z" fill="none" stroke="#666" stroke-width="2"/></svg>
        <i></i>
        <svg class="list" width="26" height="20" viewBox="0 0 26 20"><path d="M0 1.500h26M0 6h26M0 10.500h26M0 15h26M0 19h26" stroke="#555" stroke-width="2" stroke-dasharray="4 2 8 2 8 2"/></svg>
        <div class="drop"><svg width="14" height="9" viewBox="0 0 14 9"><path fill="#222" d="M0 0h14l-7 9z"/></svg></div>
      </div>
      <h2>Tables</h2>
      <ul class="fields">
        <li class="head"><svg class="cv"><use href="#chev"/></svg><svg class="tb"><use href="#table"/></svg>Destination_map</li>
        <li class="up"><b>Abc</b>CA IND (MP14 SUBZO...</li>
        <li class="up"><svg class="ic"><use href="#cal"/></svg>FMEL UPD D (MP14 S...</li>
        <li class="up"><b>Abc</b>INC CRC (MP14 SUBZ...</li>
        <li class="up"><b>Abc</b>PLN AREA C (MP14 SU...</li>
        <li class="up"><b>Abc</b>PLN AREA N (MP14 SU...</li>
        <li class="up"><b>Abc</b>REGION C (MP14 SUB...</li>
        <li class="up"><b>Abc</b>REGION N (MP14 SUB...</li>
        <li class="up"><b>Abc</b>SUBZONE C (MP14 SU...</li>
        <li class="up"><b>Abc</b>SUBZONE N (MP14 SU...</li>
        <li class="head"><svg class="cv"><use href="#chev"/></svg><svg class="tb"><use href="#table"/></svg>origin_destination_bus__...</li>
        <li><b>Abc</b>Day Type</li>
        <li><b>Abc</b>Destination Pa</li>
        <li><svg class="ic"><use href="#hash"/></svg>Destination Pt Code</li>
        <li><b>Abc</b>Destination Region</li>
        <li><b>Abc</b>Destination Sz</li>
        <li><b>Abc</b>Origin Pa</li>
        <li><svg class="ic"><use href="#hash"/></svg>Origin Pt Code</li>
        <li><b>Abc</b>Origin Region</li>
        <li><b>Abc</b>Origin Sz</li>
        <li><b>Abc</b>Pt Type</li>
        <li><b>Abc</b>Time Per Hour</li>
        <li><svg class="ic"><use href="#cal"/></svg>Year Month</li>
        <li class="head"><svg class="cv"><use href="#chev"/></svg><svg class="tb"><use href="#table"/></svg>Origin_map</li>
        <li><b>Abc</b>Ca Ind</li>
        <li><svg class="ic"><use href="#cal"/></svg>Fmel Upd D</li>
        <li><b>Abc</b>Inc Crc</li>
        <li><b>Abc</b>Pln Area C</li>
        <li><b>Abc</b>Pln Area N</li>
        <li><b>Abc</b>Region C</li>
      </ul>
      <div class="scroll"></div>
      <div class="note fieldnote"></div>
    </aside>

    <section class="cards">
      <div class="pages"><h3>Pages</h3><div class="pill blue">Time Per Hour</div></div>
      <div class="card filters"><h3>Filters</h3></div>
      <div class="card marks">
        <h3>Marks</h3>
        <div class="layer all"><svg width="34" height="26"><use href="#world"/></svg><span>All</span></div>
        <div class="marktype"><svg width="26" height="20"><use href="#world"/></svg><span>Automatic</span><div class="arrow"><svg width="14" height="9" viewBox="0 0 14 9"><path fill="#666" d="M0 0h14l-7 9z"/></svg></div></div>
        <div class="buttons">
          <div class="btn"><svg width="28" height="28"><use href="#dots4"/></svg><span>Color</span></div>
          <div class="btn"><svg width="30" height="30" viewBox="0 0 30 30" fill="none" stroke="#666" stroke-width="2"><circle cx="17.500" cy="12" r="10.500"/><circle cx="9" cy="21" r="6.500" fill="#fff"/></svg><span>Size</span></div>
          <div class="btn"><svg width="30" height="28" viewBox="0 0 30 28" fill="none" stroke="#666" stroke-width="2"><path d="M2 3h26v23H2z"/><path stroke-width="1.700" d="M10 11V8.500h10V11M15 8.500V21M12 21h6"/></svg><span>Label</span></div>
          <div class="btn"><svg width="32" height="24"><use href="#detail"/></svg><span>Detail</span></div>
          <div class="btn"><svg width="32" height="28" viewBox="0 0 32 28"><path d="M3 2h27v18h-7v6l-6-6H3z" fill="none" stroke="#666" stroke-width="2"/></svg><span>Tooltip</span></div>
        </div>
        <div class="encodings">
          <div><svg width="28" height="28"><use href="#dots4"/></svg><span class="pill blue">Destination Re..</span></div>
          <div><svg width="32" height="24"><use href="#detail"/></svg><span class="pill blue">COLLECT(Geo..</span></div>
          <div><svg width="32" height="24"><use href="#detail"/></svg><span class="pill blue">Destination Re..</span></div>
          <div><svg width="32" height="24"><use href="#detail"/></svg><span class="pill blue">Destination Sz</span></div>
        </div>
        <div class="layer"><svg width="34" height="26"><use href="#world"/></svg><span>Latitude (generat...</span></div>
        <div class="layer"><svg width="34" height="26"><use href="#world"/></svg><span>Latitude (generat...</span></div>
      </div>
    </section>

    <section class="work">
      <div class="shelf"><div class="label"><svg width="24" height="26" viewBox="0 0 24 26"><path d="M4 0v4M12 0v4M20 0v4M4 6v19M12 6v19M20 6v19" stroke="#555" stroke-width="4"/></svg><span>Columns</span></div><div class="pill green">Longitude (generated)</div></div>
      <div class="shelf rows"><div class="label"><svg width="24" height="22" viewBox="0 0 24 22"><path d="M0 3h4M0 11h4M0 19h4M6 3h18M6 11h18M6 19h18" stroke="#555" stroke-width="4"/></svg><span>Rows</span><svg class="tri" width="14" height="8" viewBox="0 0 14 8"><path fill="#b0b0b0" d="M0 0h14l-7 8z"/></svg></div><div class="pill green">Latitude (generated)</div><div class="pill dark"><span>Latitude (generate</span><svg width="13" height="8" viewBox="0 0 14 8"><path fill="#d9f5e8" d="M0 0h14l-7 8z"/></svg></div></div>
      <div class="lower">
        <div class="sheet">
          <h1>Sheet 5 - 0</h1>
          <div class="maps">
            <svg class="map" viewBox="774 998.500 1753 623">
              <use href="#basemap"/>
              <g class="places"><text x="1375" y="1096" textLength="100">Lim Chu</text><text x="1394" y="1129" textLength="63">Kang</text><text x="1326" y="1188" textLength="110">Western</text><text x="1342" y="1222" textLength="79">Water</text><text x="1311" y="1256" textLength="140">Catchment</text><text x="1317" y="1305" textLength="163">Jurong West</text><text x="1274" y="1378" textLength="94">Pioneer</text><text x="1217" y="1439" textLength="59">Tuas</text><text x="1517" y="1337" textLength="151">Bukit Timah</text><text x="1593" y="1382" textLength="94">Tanglin</text><text x="1493" y="1426" textLength="164">Queenstown</text><text x="1793" y="1269" textLength="139">Paya Lebar</text><text x="1704" y="1375" textLength="92">Kallang</text><text x="1692" y="1426" textLength="153">Marina East</text><text x="1855" y="1344" textLength="77">Bedok</text><text x="1993" y="1286" textLength="86">Changi</text><text x="2031" y="1334" textLength="143">Changi Bay</text><text x="2073" y="1156" textLength="185">North-Eastern</text><text x="2120" y="1190" textLength="92">Islands</text><text x="1622" y="1494" textLength="119">Southern</text><text x="1636" y="1528" textLength="92">Islands</text></g>
              <use href="#regions"/>
            </svg>
            <svg class="map" viewBox="774 999 1753 623">
              <use href="#basemap"/>
              <g class="places"><text x="1375" y="1096" textLength="100">Lim Chu</text><text x="1394" y="1129" textLength="63">Kang</text><text x="1326" y="1188" textLength="110">Western</text><text x="1342" y="1222" textLength="79">Water</text><text x="1311" y="1256" textLength="140">Catchment</text><text x="1317" y="1305" textLength="163">Jurong West</text><text x="1274" y="1378" textLength="94">Pioneer</text><text x="1217" y="1439" textLength="59">Tuas</text><text x="1516" y="1237" textLength="65">Bukit</text><text x="1497" y="1271" textLength="101">Panjang</text><text x="1517" y="1337" textLength="151">Bukit Timah</text><text x="1593" y="1382" textLength="94">Tanglin</text><text x="1493" y="1426" textLength="164">Queenstown</text><text x="1510" y="1088" textLength="144">Woodlands</text><text x="1650" y="1139" textLength="86">Yishun</text><text x="1785" y="1173" textLength="103">Punggol</text><text x="1628" y="1234" textLength="142">Ang Mo Kio</text><text x="1793" y="1269" textLength="139">Paya Lebar</text><text x="1647" y="1279" textLength="83">Bishan</text><text x="1704" y="1375" textLength="92">Kallang</text><text x="1692" y="1426" textLength="153">Marina East</text><text x="1855" y="1344" textLength="77">Bedok</text><text x="1993" y="1286" textLength="86">Changi</text><text x="2031" y="1334" textLength="143">Changi Bay</text><text x="2073" y="1156" textLength="185">North-Eastern</text><text x="2120" y="1190" textLength="92">Islands</text><text x="1622" y="1494" textLength="119">Southern</text><text x="1636" y="1528" textLength="92">Islands</text></g>
              <use href="#regions"/>
            </svg>
            <div class="credit">© 2022 Mapbox © OpenStreetMap</div>
          </div>
        </div>
        <div class="side">
          <div class="legend">
            <h3>Destination Region</h3>
            <ul><li><i class="c1"></i>CENTRAL REGION</li><li><i class="c2"></i>EAST REGION</li><li><i class="c3"></i>NORTH REGION</li><li><i class="c4"></i>NORTH-EAST REGION</li><li><i class="c5"></i>WEST REGION</li></ul>
          </div>
          <div class="player">
            <h3>Time Per Hour</h3>
            <div class="pick">
              <div class="box w32"><svg width="14" height="20" viewBox="0 0 14 20"><path d="M12 2L3 10l9 8" fill="none" stroke="#aaa" stroke-width="3.500"/></svg></div>
              <div class="box value"><span>0</span><div class="arrow"><svg width="14" height="8" viewBox="0 0 14 8"><path fill="#666" d="M0 0h14l-7 8z"/></svg></div></div>
              <div class="box w32"><svg width="14" height="20" viewBox="0 0 14 20"><path d="M2 2l9 8-9 8" fill="none" stroke="#44546a" stroke-width="4"/></svg></div>
            </div>
            <svg class="slider" width="282" height="24" viewBox="0 0 282 24"><path fill="#e3e3e3" d="M9 7h271v8H9z"/><path d="M8 19.500h264" stroke="#ccc" stroke-width="5" stroke-dasharray="2 9.390"/><circle cx="9" cy="10" r="8" fill="#fff" stroke="#666" stroke-width="2"/></svg>
            <div class="controls">
              <div class="box"><svg width="30" height="30"><path fill="#44546a" d="M19 7v16l-9-8z"/></svg></div>
              <div class="box on"><svg width="30" height="30"><path fill="#44546a" d="M7 7h16v16H7z"/></svg></div>
              <div class="box"><svg width="30" height="30"><path fill="#44546a" d="M11 7v16l9-8z"/></svg></div>
              <div class="box right"><svg width="30" height="30"><path fill="#44546a" d="M5 20h20v6H5z"/></svg></div>
              <div class="box on"><svg width="30" height="30"><path fill="#44546a" d="M5 12h20v6H5zM5 20h20v6H5z"/></svg></div>
              <div class="box"><svg width="30" height="30"><path fill="#44546a" d="M5 4h20v6H5zM5 12h20v6H5zM5 20h20v6H5z"/></svg></div>
            </div>
            <div class="history"><i></i><span>Show history</span><svg width="14" height="7" viewBox="0 0 14 7"><path d="M0 0h14l-7 7z"/></svg></div>
          </div>
        </div>
      </div>
    </section>
    <div class="note pagesnote"></div>
    <div class="note marksnote"></div>
  </div>
  <footer class="status"><i></i><i></i><i></i><i></i><b></b></footer>
</div>

<div class="menu">
  <div class="item">Filter...</div><hr>
  <div class="item">Show Filter</div><div class="item sub">Apply to Worksheets</div><hr>
  <div class="item">Format...</div><div class="item">Include in Tooltip</div><hr>
  <div class="item">Edit in Shelf</div><hr>
  <div class="item hot">Dual Axis</div><div class="item sub">Mark Type</div><hr>
  <div class="item">Remove</div>
</div>
<div class="note menunote"></div>
<svg class="cursor" width="26" height="40" viewBox="0 0 26 40"><path d="M2 2v28l6-5 5 11 6-3-5-10h9z" fill="#000" stroke="#fff" stroke-width="2.500" stroke-linejoin="round"/></svg>
</body>
</html>
```
FILE: styles.css
```css
*{box-sizing:border-box}
body{margin:0;width:2880px;height:1658px;overflow:hidden;position:relative;background:#2a645f;padding-top:5px;font:24.700px/30px Roboto,"Liberation Sans",sans-serif;color:#333}
.defs{position:absolute}
svg{display:block;flex:none}
h1,h2,h3,ul{margin:0;padding:0;font-weight:400;list-style:none}
h3{font-size:24.500px;line-height:30px}
.window{height:1653px;background:#f5f5f5;border-top:1px solid #000;border-radius:22px 22px 0 0;display:flex;flex-direction:column;overflow:hidden}
.titlebar{height:58px;flex:none;background:#eef2f1;border-bottom:2px solid #cfcfcf;display:flex;align-items:center}
.lights{display:flex;gap:16px;padding:0 0 2px 16px}
.lights i{width:24px;height:24px;border-radius:50%;border:1px solid #0002}
.red{background:#ec695e}.amber{background:#f4bf4f}.green-light{background:#61c554}
.title{margin-left:1117px;display:flex;align-items:center;gap:10px;padding-bottom:3px;font:700 26.600px/34px Inter,sans-serif;color:#474a49;white-space:nowrap}
.toolbar{height:78px;flex:none;display:flex;align-items:center}
.sep{width:2px;height:70px;background:#d0d0d0;flex:none}
.toolbar>.sep:first-of-type{width:1px}
.fit{margin:0 31px 0 5px;width:196px;height:46px;border:2px solid #d4d4d4;border-radius:3px;background:#f7f7f7;display:flex;align-items:center;justify-content:flex-end;padding-right:10px}
.showme{margin-left:881px;display:flex;align-items:center;gap:9px;font-size:23.800px;color:#000}
.main{flex:1;display:flex;position:relative;min-height:0}
.sidebar{width:420px;background:#fff;border-right:2px solid #d0d0d0;border-top:2px solid #d0d0d0;position:relative}
.tabs{display:flex;height:56px}
.tab{display:flex;align-items:center}
.tab.on{width:156px;padding:0 0 6px 36px;font-weight:700;color:#222;font-size:25px}
.tab.off{flex:1;border-left:2px solid #d0d0d0;border-bottom:2px solid #d0d0d0;background:#fafafa;padding:0 14px 3px 24px;justify-content:space-between;font-size:24.500px}
.source{height:59px;border-bottom:3px solid #e2e2e2;display:flex;align-items:center;padding-left:43px;gap:9px}
.searchrow{display:flex;align-items:center;padding:21px 0 0 16px}
.search{width:265px;height:46px;border:2px solid #c4c4c4;border-radius:3px;display:flex;align-items:center;justify-content:space-between;padding:0 12px 0 16px;color:#999;font-size:24.500px}
.searchrow>svg{margin-left:6px}
.searchrow>i{width:2px;height:36px;background:#d4d4d4;margin-left:9px}
.searchrow>.list{margin-left:10px}
.drop{width:32px;height:33px;background:#e4e4e4;margin-left:8px;display:flex;align-items:center;justify-content:center}
.sidebar h2{font-weight:700;font-size:24px;color:#000;padding:16px 0 0 37px;height:59px;line-height:34px}
.fields li{height:42px;display:flex;align-items:center;padding:0 0 0 124px;color:#111;white-space:nowrap;line-height:42px}
.fields .up{letter-spacing:.2px}
.fields li b{font-weight:400;font-size:18.500px;letter-spacing:0;color:#2f7796;width:52px;margin-left:-52px;padding-top:3px}
.fields .ic{width:24px;height:26px;margin:4px 24px 0 -48px}
.fields .head{padding-left:15px;font-weight:700;font-size:25.300px;color:#000;padding-top:1px}
.fields .cv{width:15px;height:10px;margin-right:18px}
.fields .tb{width:20px;height:20px;margin:1px 26px 0 0}
.scroll{position:absolute;left:400px;top:246px;width:14px;height:671px;border-radius:7px;background:#7f7f7f}
.note{position:absolute;border:5px solid #ef52f7}
.fieldnote{left:53px;top:822px;width:325px;height:94px}
.cards{width:310px;margin-left:11px;padding-top:2px}
.pages{height:121px;background:#fafafa;padding:14px 9px 0 12px;margin-bottom:13px}
.pages h3{padding-left:3px}
.pagesnote{left:430px;top:-2px;width:309px;height:128px;border-color:#a72c18}
.pill{height:40px;border-radius:20px;display:flex;align-items:center;padding:0 21px 1px;color:#fff;white-space:nowrap;font-size:24.700px}
.blue{background:#4996b2;color:#e9f7fc}
.pages .pill{margin:20px 0 0 -1px;width:288px}
.card{background:#fafafa;border:2px solid #d4d4d4;margin-left:1px;width:308px}
.card h3{padding:15px 0 0 12px}
.filters{height:156px;margin-bottom:13px}
.marks{height:764px;display:flex;flex-direction:column}
.card.marks h3{padding-top:14px;height:58px;line-height:30px}
.layer{height:64px;border-top:2px solid #dcdcdc;display:flex;padding:16px 0 0 19px;gap:20px;color:#000}
.layer span{padding-top:6px}
.layer.all{border-bottom:2px solid #dcdcdc;height:65px;padding-top:15px}
.all span{font-weight:700;padding-top:5px}
.marktype{margin:11px 12px 12px;height:42px;flex:none;border:2px solid #c4c4c4;border-radius:3px;display:flex;align-items:center;font-size:20.400px;padding-left:20px;gap:13px;background:#fafafa}
.arrow{margin-left:auto;height:100%;border-left:2px solid #dcdcdc;display:flex;align-items:center}
.marktype .arrow{width:37px;padding-left:10px}
.buttons{margin:0 12px;display:grid;grid-template-columns:87px 86px 87px;column-gap:10px;row-gap:12px;height:182px;flex:none;align-content:start}
.btn{height:84px;border:2px solid #d0d0d0;background:#fff;display:flex;flex-direction:column;align-items:center;font-size:20.400px;line-height:24px}
.btn svg{margin-top:13px}
.btn span{margin-top:auto;padding-bottom:3px}
.encodings{display:flex;flex-direction:column;gap:6px;padding:16px 0 0 23px;height:264px;flex:none}
.encodings>div{display:flex;align-items:center;height:40px}
.encodings svg{width:34px;margin-right:5px}
.encodings .pill{width:222px}
.marksnote{left:431px;top:674px;width:307px;height:221px}
.work{width:2117px;margin-left:11px}
.shelf{height:56px;background:#fafafa;border:2px solid #d4d4d4;display:flex;align-items:center;gap:4px;margin-bottom:12px}
.shelf.rows{border-color:#b0b0b0}
.label{width:249px;height:100%;border-right:2px solid #d4d4d4;display:flex;align-items:center;padding-left:12px;gap:14px}
.label span{padding-bottom:1px}
.tri{margin-left:auto;margin-right:12px}
.shelf .pill{width:297px;font-size:24.800px}
.green{background:#50b081;color:#eafff5}
.dark{background:#439668;color:#dcf7ea;justify-content:space-between}
.pill.dark{padding-right:29px}
.lower{display:flex}
.sheet{width:1796px;height:1363px;background:#fff;border:2px solid #d4d4d4;padding-left:18px}
.sheet h1{font:300 40px/46px "Open Sans",sans-serif;color:#333;padding:26px 0 0 2px;height:92px}
.maps{width:1757px;height:1252px;border:2px solid #e2e2e2;position:relative}
.map{width:1753px;height:623px}
.map+.map{height:625px;border-top:2px solid #e0e0e0}
.places text{font:27px "Open Sans",sans-serif;fill:#8b8b8b;stroke:#fcfcfc;stroke-width:4px;paint-order:stroke;stroke-linejoin:round}
.credit{position:absolute;left:3px;bottom:3px;padding:0 7px;background:#fafafa;font:15.900px/24px "Liberation Sans",sans-serif;color:#555}
.side{width:308px;margin-left:12px}
.legend{height:264px;border:2px solid #d4d4d4;background:#fff}
.side h3{background:#fafafa;padding:15px 0 0 12px;height:58px}
.legend li{height:40px;display:flex;align-items:center;font:24px/40px "Open Sans",sans-serif;padding:2px 0 0 7px;gap:11px;white-space:nowrap}
.legend i{width:26px;height:26px;border:2px solid #6b6b6b;flex:none}
.c1{background:#f0d46d}.c2{background:#79b270}.c3{background:#7094bb}.c4{background:#bf94b3}.c5{background:#e67777}
.player{margin-top:12px;height:232px;border:2px solid #d4d4d4;background:#fafafa;padding:0 12px}
.side .player h3{padding-left:0;height:59px}
.pick{display:flex;gap:4px}
.box{height:38px;border:2px solid #ccc;border-radius:3px;background:#fff;display:flex;align-items:center;justify-content:center}
.w32{width:32px}
.value{flex:1;justify-content:flex-start;background:#fafafa;padding-left:7px;font:23px "Open Sans",sans-serif}
.value .arrow{width:36px;padding-left:10px}
.slider{margin-top:17px}
.controls{display:flex;gap:2px;margin-top:12px}
.controls .box{width:32px;height:32px}
.controls .box.on{background:#d3d3d3;border-color:#666}
.controls .right{margin-left:auto}
.history{display:flex;align-items:center;margin-top:8px;font-size:20.400px;color:#666}
.history i{width:30px;height:30px;border:2px solid #ccc;border-radius:3px;background:#fff;margin-right:9px}
.history svg{margin-left:8px}
.status{height:4px;flex:none;background:#e2e2e2;border-top:1px solid #c4c4c4;display:flex;padding-left:261px;gap:205px}
.status i{width:2px;background:#bbb}
.status b{width:114px;background:#fff;margin-left:182px}
.menu{position:absolute;left:1498px;top:240px;width:386px;height:460px;border-radius:10px;background:#eaeaea;padding:8px 0;box-shadow:0 0 2px #0006,0 12px 40px #0005;font:25.800px/37px Inter,sans-serif;color:#222}
.item{height:36px;padding-left:36px;position:relative}
.sub::after{content:"";position:absolute;right:22px;top:9px;border:8px solid transparent;border-left:16px solid #222;border-right:0}
.hot{background:#4276f2;color:#fff}
hr{border:0;height:4px;background:#d3d3d3;margin:10px 0}
.menunote{left:1003px;top:202px;width:886px;height:504px;border-color:#000}
.cursor{position:absolute;left:1585px;top:564px}
```
